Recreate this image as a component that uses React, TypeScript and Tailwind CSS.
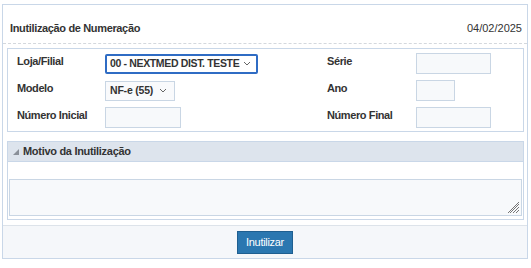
import React from "react";

function Chevron() {
  return (
    <svg width="8" height="5" viewBox="0 0 8 5" className="shrink-0">
      <path d="M1 1 L4 4 L7 1" fill="none" stroke="#666" strokeWidth="1" />
    </svg>
  );
}

function Field({ w }: { w: string }) {
  return <div className={`${w} h-[21px] bg-[#f7f9fb] border border-[#c9d6e4]`} />;
}

export default function App() {
  return (
    <div className="w-[531px] h-[268px] bg-white font-['Liberation_Sans',Arial,sans-serif] text-[11px] text-[#333] overflow-hidden">
      <div className="ml-[2px] mt-[4px] w-[526px] border border-[#c9d7e8]">

        {/* HEADER */}
        <div className="flex items-center justify-between pl-[7px] pr-[5px] pt-[16px] pb-[8px] border-b border-dashed border-[#d4d8dd] leading-[14px]">
          <span className="font-bold tracking-[-0.35px]">Inutilização de Numeração</span>
          <span className="text-[#333]">04/02/2025</span>
        </div>

        {/* FORM */}
        <div className="ml-[4px] mt-[4px] w-[517px] border border-[#c9d7e8] pt-[1px] font-bold tracking-[-0.4px]">
          <div className="flex items-center h-[27px] pl-[9px]">
            <span className="w-[88px] -mt-[4px]">Loja/Filial</span>
            <div className="w-[222px]">
              <div className="w-[153px] h-[20px] border-2 border-[#2f6cc4] rounded-[2px] bg-white flex items-center justify-between pl-[3px] pr-[5px] whitespace-nowrap text-[10.5px] tracking-[-0.35px]">
                <span>00 - NEXTMED DIST. TESTE</span>
                <Chevron />
              </div>
            </div>
            <span className="w-[89px] -mt-[4px]">Série</span>
            <Field w="w-[75px]" />
          </div>

          <div className="flex items-center h-[27px] pl-[9px]">
            <span className="w-[88px] -mt-[4px]">Modelo</span>
            <div className="w-[222px]">
              <div className="w-[70px] h-[20px] border border-[#c9d6e4] bg-[#f9fafc] flex items-center justify-between pl-[4px] pr-[7px] whitespace-nowrap text-[10.5px] tracking-[-0.2px]">
                <span>NF-e (55)</span>
                <Chevron />
              </div>
            </div>
            <span className="w-[89px] -mt-[4px]">Ano</span>
            <Field w="w-[39px]" />
          </div>

          <div className="flex items-center h-[27px] pl-[9px]">
            <span className="w-[88px] -mt-[4px]">Número Inicial</span>
            <div className="w-[222px]">
              <Field w="w-[76px]" />
            </div>
            <span className="w-[89px] -mt-[4px]">Número Final</span>
            <Field w="w-[75px]" />
          </div>
        </div>

        {/* MOTIVO */}
        <div className="ml-[4px] mt-[9px] w-[517px] border border-[#c9d7e8] pb-[3px]">
          <div className="h-[20px] bg-[#dde4ed] border-b border-[#c9d7e8] flex items-center pl-[5px] gap-[4px] font-bold tracking-[-0.3px]">
            <svg width="6" height="6" viewBox="0 0 6 6">
              <path d="M6 0 L6 6 L0 6 Z" fill="#8a9099" />
            </svg>
            <span>Motivo da Inutilização</span>
          </div>
          <div className="h-[17px]" />
          <div className="relative mx-[1px] h-[37px] bg-[#f7f9fb] border border-[#c9d6e4]">
            <svg width="12" height="12" viewBox="0 0 12 12" className="absolute right-[1px] bottom-[1px]">
              <path d="M11 2 L2 11 M11 5 L5 11 M11 8 L8 11 M11 0 L0 11" stroke="#777" strokeWidth="1" />
            </svg>
          </div>
        </div>

        {/* FOOTER */}
        <div className="mt-[5px] h-[33px] bg-[#f5f7fa] border-t border-[#dde3ea] flex items-center justify-center">
          <button className="h-[23px] px-[8px] bg-[#2b77b0] border border-[#1f5f90] text-white text-[11px] tracking-[-0.3px] leading-none">
            Inutilizar
          </button>
        </div>
      </div>
    </div>
  );
}
